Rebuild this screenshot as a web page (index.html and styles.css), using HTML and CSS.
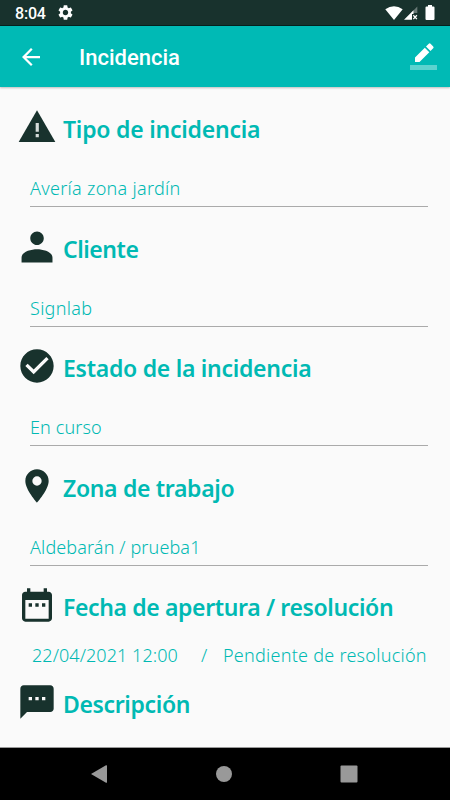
FILE: index.html
```html
<!DOCTYPE html>
<html lang="es">
<head>
  <meta charset="UTF-8">
  <meta name="viewport" content="width=device-width, initial-scale=1.0">
  <title>Incidencia</title>
  <link rel="stylesheet" href="styles.css">
</head>
<body>
  <div class="status-bar">
    <span class="clock">8:04</span>
    <svg class="gear" viewBox="2 2 20 20"><path fill-rule="evenodd" d="M19.14 12.94c.04-.3.06-.61.06-.94 0-.32-.02-.64-.07-.94l2.03-1.58a.49.49 0 0 0 .12-.61l-1.92-3.32a.488.488 0 0 0-.59-.22l-2.39.96c-.5-.38-1.03-.7-1.62-.94l-.36-2.54a.484.484 0 0 0-.48-.41h-3.84c-.24 0-.43.17-.47.41l-.36 2.54c-.59.24-1.13.57-1.62.94l-2.39-.96c-.22-.08-.47 0-.59.22L2.74 8.87c-.12.21-.08.47.12.61l2.03 1.58c-.05.3-.09.63-.09.94s.02.64.07.94l-2.03 1.58a.49.49 0 0 0-.12.61l1.92 3.32c.12.22.37.29.59.22l2.39-.96c.5.38 1.03.7 1.62.94l.36 2.54c.05.24.24.41.48.41h3.84c.24 0 .44-.17.47-.41l.36-2.54c.59-.24 1.13-.56 1.62-.94l2.39.96c.22.08.47 0 .59-.22l1.92-3.32c.12-.22.07-.47-.12-.61l-2.01-1.58zM12 15.6A3.61 3.61 0 0 1 8.4 12c0-1.98 1.62-3.6 3.6-3.6s3.6 1.62 3.6 3.6-1.62 3.6-3.6 3.6z"/></svg>
    <div class="status-icons">
      <svg width="18" height="14" viewBox="0 0 18 14"><path d="M.3 3.2Q9-2.8 17.7 3.2L9 14z"/></svg>
      <svg class="signal" width="14" height="14" viewBox="0 0 14 14">
        <path d="M13.3.5V7H7z" opacity=".35"/>
        <path d="M9.5 4.3V8H8v5.8H0z"/>
        <path class="cross" d="M9.3 9.3l3.6 3.8M12.9 9.3l-3.6 3.8"/>
      </svg>
      <svg width="10" height="15" viewBox="0 0 10 15"><path d="M3 0h4v1.5h1.5q1 0 1 1V14q0 1-1 1h-7q-1 0-1-1V2.5q0-1 1-1H3z"/></svg>
    </div>
  </div>

  <div class="app-bar">
    <svg class="back" viewBox="4 4 16 16"><path d="M20 11H7.83l5.59-5.59L12 4l-8 8 8 8 1.41-1.41L7.83 13H20v-2z"/></svg>
    <h1>Incidencia</h1>
    <svg class="edit" viewBox="0 0 27 28">
      <path d="M5 15.5V20h4.5l9.8-9.8-4.5-4.5zM16 4.500L20.500 9l2.700-2.700Q24.100 5.400 23.200 4.500L20.600 1.700Q19.700.8 18.800 1.700z"/>
      <path d="M0 23h27v5H0z" opacity=".36"/>
    </svg>
  </div>

  <div class="content">
    <div class="section">
      <div class="section-title">
        <svg viewBox="0 0 24 24"><path d="M1 21h22L12 2 1 21z"/><path class="inner" d="M11.200 16.200h1.900v1.900h-1.900zM11.200 9.600h1.900v5.200h-1.900z"/></svg>
        <h2 class="tipo">Tipo de incidencia</h2>
      </div>
      <div class="field"><span class="averia">Avería zona jardín</span></div>
    </div>
    <div class="section">
      <div class="section-title">
        <svg viewBox="1.64 1.64 20.7 20.7"><path d="M12 11c1.9 0 3.5-1.55 3.5-3.5S13.9 4 12 4 8.500 5.550 8.500 7.500 10.100 11 12 11zM12 13.200c-3.200 0-8 1.300-8 4.300V20h16v-2.500c0-3-4.800-4.300-8-4.300z"/></svg>
        <h2 class="cliente">Cliente</h2>
      </div>
      <div class="field"><span class="signlab">Signlab</span></div>
    </div>
    <div class="section">
      <div class="section-title">
        <svg viewBox="0 0 24 24"><path fill-rule="evenodd" d="M12 2C6.480 2 2 6.480 2 12s4.480 10 10 10 10-4.480 10-10S17.520 2 12 2zm-2 15l-5-5 1.410-1.410L10 14.170l7.590-7.590L19 8l-9 9z"/></svg>
        <h2 class="estado">Estado de la incidencia</h2>
      </div>
      <div class="field"><span class="curso">En curso</span></div>
    </div>
    <div class="section">
      <div class="section-title">
        <svg viewBox="0 0 24 24"><path fill-rule="evenodd" d="M12 2C8.130 2 5 5.130 5 9c0 5.250 7 13 7 13s7-7.750 7-13c0-3.870-3.130-7-7-7zm0 9.800a2.800 2.800 0 0 1 0-5.600 2.800 2.800 0 0 1 0 5.600z"/></svg>
        <h2 class="zona">Zona de trabajo</h2>
      </div>
      <div class="field"><span class="aldebaran">Aldebarán / prueba1</span></div>
    </div>
    <div class="section dates-section">
      <div class="section-title">
        <svg viewBox="0 0 24 24"><path fill-rule="evenodd" d="M9 11H7v2h2v-2zm4 0h-2v2h2v-2zm4 0h-2v2h2v-2zm2-7h-1V2h-2v2H8V2H6v2H5c-1.110 0-1.990.9-1.990 2L3 20c0 1.100.89 2 2 2h14c1.100 0 2-.9 2-2V6c0-1.100-.9-2-2-2zm0 16.300H5V9h14v11.300z"/></svg>
        <h2 class="fecha">Fecha de apertura / resolución</h2>
      </div>
      <div class="dates">
        <span class="opened">22/04/2021 12:00</span>
        <span class="slash">/</span>
        <span class="resolved">Pendiente de resolución</span>
      </div>
    </div>
    <div class="section-title">
      <svg viewBox="0 0 24 24"><path fill-rule="evenodd" d="M20 2H4c-1.100 0-1.990.9-1.990 2L2 22l4-4h14c1.100 0 2-.9 2-2V4c0-1.100-.9-2-2-2zM9 11H7V9h2v2zm4 0h-2V9h2v2zm4 0h-2V9h2v2z"/></svg>
      <h2 class="descripcion">Descripción</h2>
    </div>
  </div>

  <div class="nav-bar">
    <svg viewBox="0 0 18 18"><path d="M1 9L16 .3Q17-.2 17 1V17Q17 18.200 16 17.700z"/></svg>
    <svg viewBox="0 0 18 18"><circle cx="9" cy="9" r="8"/></svg>
    <svg viewBox="0 0 18 18"><rect x=".5" y=".5" width="17" height="17" rx="1"/></svg>
  </div>
</body>
</html>
```
FILE: styles.css
```css
* {
  box-sizing: border-box;
}
body {
  margin: 0;
  height: 800px;
  display: flex;
  flex-direction: column;
  overflow: hidden;
  background: #fafafa;
  color: #00b9b3;
  font-family: "Noto Sans", sans-serif;
}
svg {
  display: block;
  flex: none;
}
h1, h2 {
  margin: 0;
}
.status-bar {
  height: 26px;
  flex: none;
  display: flex;
  align-items: center;
  padding: 0 15px;
  background: #18322d;
  border-bottom: 1px solid #06211e;
  color: #fff;
  fill: #fff;
}
.clock {
  font: 500 16px/26px Roboto, sans-serif;
  letter-spacing: -0.2px;
  width: 43px;
  padding-top: 2px;
}
.gear {
  width: 15px;
  height: 15px;
}
.status-icons {
  display: flex;
  align-items: center;
  margin-left: auto;
}
.signal {
  margin: 0 7px 0 1px;
}
.cross {
  stroke: #fff;
  stroke-width: 1.3;
}
.app-bar {
  height: 61px;
  flex: none;
  display: flex;
  align-items: center;
  padding: 0 13px 0 22px;
  background: #00bab5;
  color: #fff;
  fill: #fff;
  box-shadow: 0 1px 2px rgba(0, 0, 0, 0.25);
}
.back {
  width: 18px;
  height: 18px;
}
.app-bar h1 {
  font: 500 22px/30px Roboto, sans-serif;
  margin-left: 39px;
  padding-top: 3px;
}
.edit {
  width: 27px;
  height: 28px;
  margin-left: auto;
  margin-bottom: 2px;
}
.content {
  flex: 1;
  padding: 20px 22px 0 17px;
}
.section {
  height: 119.6px;
}
.section-title {
  display: flex;
  height: 40px;
  fill: #18322d;
}
.section-title svg {
  width: 40px;
  height: 40px;
}
.section-title h2 {
  font-size: 23px;
  font-weight: 600;
  line-height: 40px;
  margin-left: 6px;
  padding-top: 2px;
  white-space: nowrap;
}
.section-title .tipo {
  letter-spacing: -0.22px;
}
.section-title .cliente {
  letter-spacing: -0.45px;
}
.section-title .estado {
  letter-spacing: -0.27px;
}
.section-title .zona {
  letter-spacing: -0.33px;
}
.section-title .fecha {
  letter-spacing: -0.37px;
}
.section-title .descripcion {
  letter-spacing: -0.36px;
}
.inner {
  fill: #d5dcda;
}
.field {
  height: 60px;
  margin-left: 13px;
  padding-top: 28px;
  border-bottom: 1px solid #aaa;
  font-size: 18px;
  font-weight: 300;
  line-height: 26px;
}
.averia, .signlab {
  letter-spacing: 0.3px;
}
.curso, .aldebaran {
  letter-spacing: 0.12px;
}
.dates-section {
  height: 97px;
}
.dates {
  display: flex;
  padding: 17px 0 0 15px;
  font-size: 18px;
  font-weight: 300;
  line-height: 26px;
  white-space: nowrap;
}
.opened {
  width: 169px;
  letter-spacing: 0.06px;
}
.slash {
  width: 22px;
}
.resolved {
  letter-spacing: 0.26px;
}
.nav-bar {
  height: 53px;
  flex: none;
  display: flex;
  align-items: center;
  justify-content: space-between;
  padding: 0 92px 0 90px;
  background: #000;
  border-top: 1px solid #999;
  fill: #999;
}
.nav-bar svg {
  width: 18px;
  height: 18px;
}
```
